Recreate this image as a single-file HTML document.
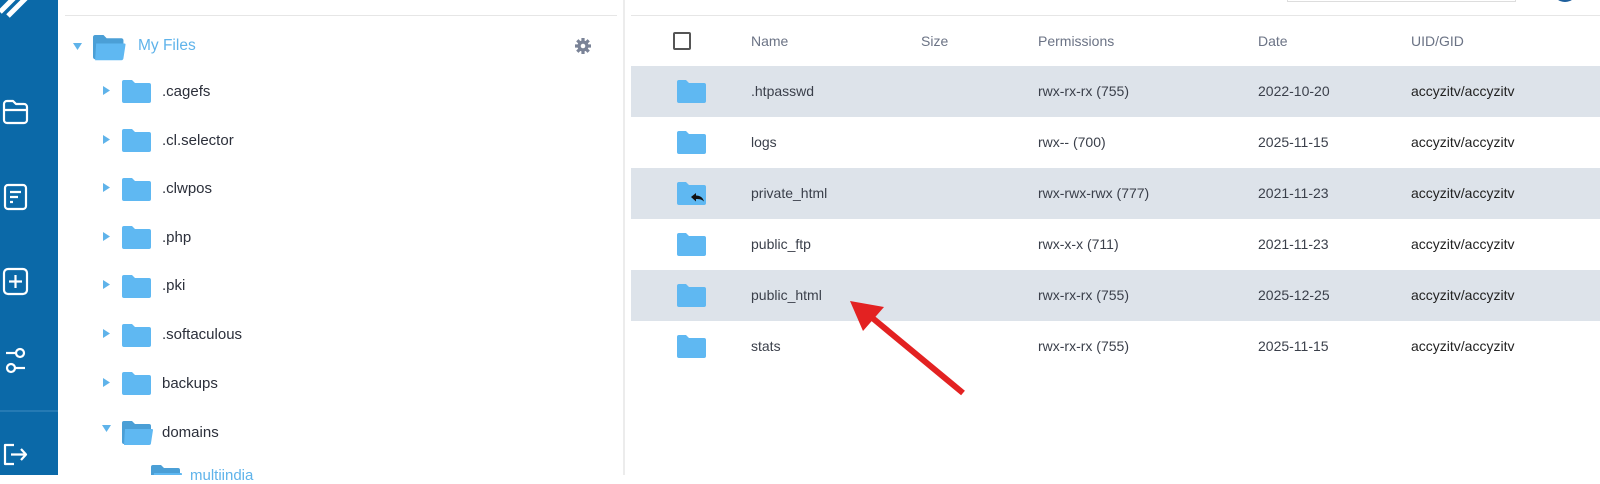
<!DOCTYPE html>
<html><head><meta charset="utf-8"><style>
*{margin:0;padding:0;box-sizing:border-box}
body{width:1600px;height:475px;overflow:hidden;background:#fff;font-family:"Liberation Sans",sans-serif;position:relative}
.a{position:absolute}
.sb{left:0;top:0;width:58px;height:475px;background:#0b69a8}
.t{position:absolute;font-size:15px;color:#2b2f3a;white-space:nowrap}
.h{position:absolute;font-size:14px;color:#6b7385;white-space:nowrap}
.c{position:absolute;font-size:14px;color:#3a3f4a;white-space:nowrap}
.row{position:absolute;left:631px;width:969px;height:51px}
.sh{background:#dde3ea}
</style></head><body>
<div class="a sb"></div>
<svg class="a" style="left:0;top:0" width="58" height="475">
<path d="M0 12 L14 -2 M8 16 L26 -2" stroke="#fff" stroke-width="5"/>
<g fill="none" stroke="#fff" stroke-width="2.2" stroke-linejoin="round">
<path d="M4 104 a3 3 0 0 1 3-3 h6 l3 3 h8 a3 3 0 0 1 3 3 v13 a3 3 0 0 1 -3 3 h-17 a3 3 0 0 1 -3-3z M4 110 h23"/>
<rect x="5" y="185" width="21" height="24" rx="3"/>
<path d="M10 192 h11 M10 197 h8 M10 202 h3"/>
<rect x="4" y="269" width="23" height="25" rx="4"/>
<path d="M15.5 275 v13 M9 281.5 h13"/>
<circle cx="20" cy="353" r="4"/><path d="M6 353 h10"/>
<circle cx="11" cy="368" r="4"/><path d="M15 368 h10"/>
<path d="M14 445 h-9 v19 h9 M11 454.5 h15 M21 449 l5 5.5 -5 5.5"/>
</g>
<line x1="0" y1="411" x2="58" y2="411" stroke="#3f8ac0" stroke-width="1"/>
</svg>
<div class="a" style="left:65px;top:15px;width:552px;height:1px;background:#e6e6e6"></div>
<div class="a" style="left:623px;top:0;width:2px;height:475px;background:#ececec"></div>
<div class="a" style="left:631px;top:15px;width:969px;height:1px;background:#e6e6e6"></div>
<div class="a" style="left:1287px;top:-2px;width:229px;height:4px;border:1px solid #ddd"></div>
<div class="a" style="left:1553px;top:-20px;width:24px;height:22px;border-radius:50%;background:#1e5f9c"></div>

<svg class="a" style="left:60px;top:30px" width="560" height="445">
<defs>
<g id="f"><path d="M0 3 a2 2 0 0 1 2-2 h8 l3 3 h14 a2 2 0 0 1 2 2 v16 a2 2 0 0 1 -2 2 h-25 a2 2 0 0 1 -2-2z" fill="#5fb8f2"/></g>
<g id="fo"><path d="M0 3 a2 2 0 0 1 2-2 h8 l3 3 h14 a2 2 0 0 1 2 2 v16 a2 2 0 0 1 -2 2 h-25 a2 2 0 0 1 -2-2z" fill="#4b9fd6"/><path d="M3 9 h27 a1 1 0 0 1 1 1 l-2 13 a2 2 0 0 1 -2 2 h-25 z" fill="#5fb8f2"/></g>
</defs>
<path d="M13 13 h9 l-4.5 7z" fill="#5fb3ea"/>
<use href="#fo" x="33" y="4" transform="translate(33 4) scale(1.05) translate(-33 -4)"/>
<g fill="#5fb3ea">
<path d="M43 56 v9 l7-4.5z"/><path d="M43 105 v9 l7-4.5z"/><path d="M43 153 v9 l7-4.5z"/><path d="M43 202 v9 l7-4.5z"/><path d="M43 250 v9 l7-4.5z"/><path d="M43 299 v9 l7-4.5z"/><path d="M43 348 v9 l7-4.5z"/>
<path d="M42 395 h9 l-4.5 7z"/>
</g>
<use href="#f" x="62" y="49"/><use href="#f" x="62" y="98"/><use href="#f" x="62" y="147"/><use href="#f" x="62" y="195"/><use href="#f" x="62" y="244"/><use href="#f" x="62" y="293"/><use href="#f" x="62" y="341"/>
<use href="#fo" x="62" y="390"/>
<use href="#fo" x="91" y="434"/>
<g transform="translate(523 16)" fill="#7a8397"><circle cx="0" cy="0" r="5.5"/><g stroke="#7a8397" stroke-width="3.2"><path d="M0 -8 v16 M-8 0 h16 M-5.7 -5.7 l11.4 11.4 M5.7 -5.7 l-11.4 11.4"/></g><circle r="2.3" fill="#fff"/></g>
</svg>
<div class="t" style="left:138px;top:37px;color:#5fb3ea;font-size:15.5px">My Files</div>
<div class="t" style="left:162px;top:83px">.cagefs</div>
<div class="t" style="left:162px;top:132px">.cl.selector</div>
<div class="t" style="left:162px;top:180px">.clwpos</div>
<div class="t" style="left:162px;top:229px">.php</div>
<div class="t" style="left:162px;top:277px">.pki</div>
<div class="t" style="left:162px;top:326px">.softaculous</div>
<div class="t" style="left:162px;top:375px">backups</div>
<div class="t" style="left:162px;top:424px">domains</div>
<div class="t" style="left:190px;top:467px;color:#5fb3ea">multiindia</div>

<div class="row sh" style="top:66px"></div>
<div class="row" style="top:117px"></div>
<div class="row sh" style="top:168px"></div>
<div class="row" style="top:219px"></div>
<div class="row sh" style="top:270px"></div>
<div class="row" style="top:321px"></div>
<div class="a" style="left:673px;top:32px;width:18px;height:18px;border:2px solid #555;border-radius:2px"></div>
<div class="h" style="left:751px;top:33px">Name</div>
<div class="h" style="left:921px;top:33px">Size</div>
<div class="h" style="left:1038px;top:33px">Permissions</div>
<div class="h" style="left:1258px;top:33px">Date</div>
<div class="h" style="left:1411px;top:33px">UID/GID</div>

<svg class="a" style="left:676px;top:66px" width="32" height="306">
<use href="#f2" y="14"/><use href="#f2" y="65"/><use href="#f2" y="116"/><use href="#f2" y="167"/><use href="#f2" y="218"/><use href="#f2" y="269"/>
<defs><path id="f2" d="M1 2 a2 2 0 0 1 2-2 h7 l3 3 h15 a2 2 0 0 1 2 2 v16 a2 2 0 0 1 -2 2 h-25 a2 2 0 0 1 -2-2z" fill="#5fb8f2"/></defs>
<path d="M15 131 l5-4 v2.5 c4 0 7 2 8 6 c-2-2-4-2.5-8-2.5 v2.5z" fill="#111"/>
</svg>

<div class="c" style="left:751px;top:83px">.htpasswd</div>
<div class="c" style="left:751px;top:134px">logs</div>
<div class="c" style="left:751px;top:185px">private_html</div>
<div class="c" style="left:751px;top:236px">public_ftp</div>
<div class="c" style="left:751px;top:287px">public_html</div>
<div class="c" style="left:751px;top:338px">stats</div>

<div class="c" style="left:1038px;top:83px">rwx-rx-rx (755)</div>
<div class="c" style="left:1038px;top:134px">rwx-- (700)</div>
<div class="c" style="left:1038px;top:185px">rwx-rwx-rwx (777)</div>
<div class="c" style="left:1038px;top:236px">rwx-x-x (711)</div>
<div class="c" style="left:1038px;top:287px">rwx-rx-rx (755)</div>
<div class="c" style="left:1038px;top:338px">rwx-rx-rx (755)</div>

<div class="c" style="left:1258px;top:83px">2022-10-20</div>
<div class="c" style="left:1258px;top:134px">2025-11-15</div>
<div class="c" style="left:1258px;top:185px">2021-11-23</div>
<div class="c" style="left:1258px;top:236px">2021-11-23</div>
<div class="c" style="left:1258px;top:287px">2025-12-25</div>
<div class="c" style="left:1258px;top:338px">2025-11-15</div>

<div class="c" style="left:1411px;top:83px;color:#222">accyzitv/accyzitv</div>
<div class="c" style="left:1411px;top:134px;color:#222">accyzitv/accyzitv</div>
<div class="c" style="left:1411px;top:185px;color:#222">accyzitv/accyzitv</div>
<div class="c" style="left:1411px;top:236px;color:#222">accyzitv/accyzitv</div>
<div class="c" style="left:1411px;top:287px;color:#222">accyzitv/accyzitv</div>
<div class="c" style="left:1411px;top:338px;color:#222">accyzitv/accyzitv</div>

<svg class="a" style="left:0;top:0" width="1600" height="475">
<line x1="963" y1="393" x2="870" y2="316" stroke="#e32222" stroke-width="6"/>
<path d="M850 301 L884 307 L863 331 Z" fill="#e32222"/>
</svg>
</body></html>
